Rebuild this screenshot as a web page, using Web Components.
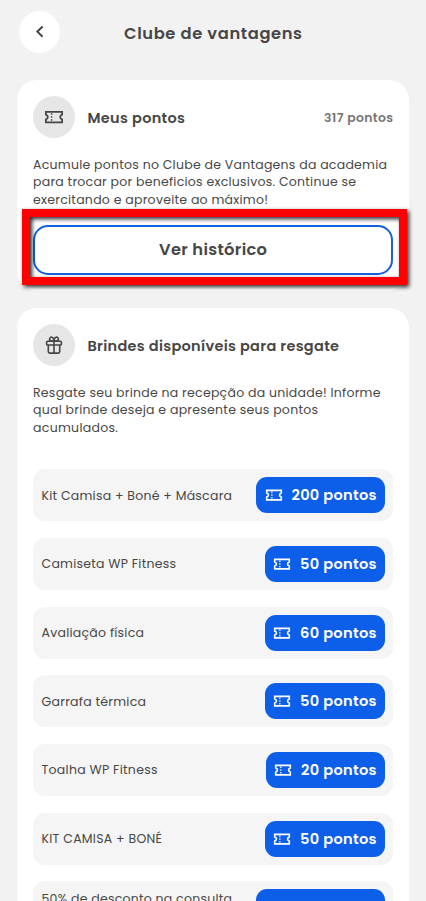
<!DOCTYPE html>
<html lang="pt-BR">
<head>
<meta charset="utf-8">
<title>Clube de vantagens</title>
<style>
html,body{margin:0;height:901px;overflow:hidden;background:#f2f2f2}
body{font-family:Poppins,Inter,"Noto Sans",sans-serif;color:#464646}
</style>
</head>
<body>
<club-page></club-page>
<script>
const define=(name,html,setup)=>customElements.define(name,class extends HTMLElement{
  connectedCallback(){
    if(this.shadowRoot)return;
    this.attachShadow({mode:'open'}).innerHTML=html;
    if(setup)setup.call(this,this.shadowRoot);
  }
});

// A single line of text, tracked so that it spans the width given in "w".
define('text-line','<style>:host{display:block;white-space:nowrap}span{display:inline-block}</style><span><slot></slot></span>',function(root){
  const span=root.querySelector('span'),w=+this.getAttribute('w');
  const n=this.textContent.length;
  span.style.letterSpacing=((w-span.getBoundingClientRect().width)/(n-1))+'px';
  this.style.width=w+'px';
});

define('ticket-icon','<style>:host{display:block;width:20px;height:20px}svg{display:block;width:100%;height:100%}</style><svg viewBox="0 0 20 20" fill="none" stroke="currentColor" stroke-width="1.8"><path d="M1.9 4.8H18.1V7.7C16.8 8.1 16.2 9 16.2 10s.6 1.9 1.9 2.3v3.1H1.9v-3.1C3.2 11.9 3.8 11 3.8 10S3.2 8.1 1.9 7.7z"/><path d="M7.6 6.2v1.5M7.6 9.2v1.6M7.6 12.3v1.5" stroke-width="1.4"/></svg>');

define('gift-icon','<style>:host{display:block;width:18px;height:20px}svg{display:block}</style><svg width="18" height="20" viewBox="0 0 18 20" fill="none" stroke="currentColor" stroke-width="1.6" stroke-linejoin="round"><rect x="1.6" y="6.2" width="14.8" height="3.8" rx="1.1"/><path d="M3.3 10v6.6q0 1.5 1.5 1.5h8.4q1.5 0 1.5-1.5V10M9 6v12M9 6H6.4Q4.5 5.8 4.6 4C4.7 2.4 6 1.8 7.1 2.3 8.3 2.8 9 4.4 9 6zM9 6h2.6q1.9-.2 1.8-2C13.3 2.4 12 1.8 10.9 2.3 9.7 2.8 9 4.4 9 6z"/></svg>');

define('page-header',`<style>
:host{display:grid;grid-template-columns:42px 1fr 42px;align-items:center;height:64px;padding:0 19px;box-sizing:border-box}
.back{width:41px;height:42px;border-radius:50%;background:#fff;display:grid;place-items:center}
.t{justify-self:center;font:600 16.3px/24px Poppins,Inter,sans-serif;padding-top:3px}
</style><div class="back"><svg width="12" height="16" viewBox="0 0 12 16" fill="none" stroke="#444" stroke-width="2"><path d="M8.6 2.5 3.4 7.6l5.2 5.1"/></svg></div><div class="t"><slot></slot></div>`);

define('info-card',`<style>
:host{display:block;background:#fff;border-radius:20px;padding:16.5px 16px 16px;box-sizing:border-box;width:392px}
header{display:flex;align-items:center;height:41px}
.c{width:42px;height:42px;border-radius:50%;background:#e6e6e6;display:grid;place-items:center;margin-right:12.5px;flex:none}
.h{font-size:14.5px;font-weight:600;line-height:20px;padding-top:1px}
.m{margin-left:auto;font-size:12.4px;font-weight:600;line-height:20px;color:#747474;padding-top:1px}
.p{font-size:12.5px;line-height:17.6px;margin-top:18px}
</style><header><div class="c"><slot name="icon"></slot></div><div class="h"><slot name="title"></slot></div><div class="m"><slot name="meta"></slot></div></header><div class="p"><slot name="text"></slot></div><slot></slot>`);

define('outline-button',`<style>
:host{display:flex;align-items:center;justify-content:center;height:50px;margin-top:16.5px;box-sizing:border-box;border:2px solid #1560df;border-radius:15px;font-size:16.3px;font-weight:600;line-height:24px;background:#fff}
::slotted(*){margin-top:1px}
</style><slot></slot>`);

define('highlight-frame',`<style>
:host{display:block;position:absolute;left:22px;top:209px;width:385px;height:76px;box-sizing:border-box;border:8px solid #f00;filter:drop-shadow(2px 2px 2px rgba(0,0,0,.85));pointer-events:none}
</style>`);

define('points-badge',`<style>
:host{display:flex;align-items:center;justify-content:space-between;height:36px;box-sizing:border-box;padding:0 8px 0 8.5px;border-radius:11px;background:#0d5fe9;color:#fff;font-size:14.6px;font-weight:600;line-height:20px;flex:none}
ticket-icon{width:18px;height:18px}
</style><ticket-icon></ticket-icon><slot></slot>`);

define('gift-row',`<style>
:host{display:flex;align-items:center;justify-content:space-between;height:52px;padding:0 8.5px;margin-bottom:16.67px;box-sizing:border-box;border-radius:12px;background:#f5f5f5;font-size:12.5px;line-height:18px}
::slotted(text-line){padding-top:1px}
::slotted(.two-line){padding-bottom:17px}
</style><slot></slot><slot name="badge"></slot>`);

const rows=[
 ['Kit Camisa + Boné + Máscara',190.5,'200 pontos',85,128.5],
 ['Camiseta WP Fitness',134.5,'50 pontos',76.5,120],
 ['Avaliação física',102.5,'60 pontos',76.5,120],
 ['Garrafa térmica',104.5,'50 pontos',76.5,120],
 ['Toalha WP Fitness',116,'20 pontos',75.5,119],
 ['KIT CAMISA + BONÉ',120.5,'50 pontos',76.5,120],
 ['50% de desconto na consulta',190.5,'',0,128.5]
];
define('club-page',`<style>
:host{display:block;position:relative;height:901px;overflow:hidden}
main{display:flex;flex-direction:column;gap:17px;padding:16px 17px 0}
.one{height:211px}
.two{height:640px;flex:none}
.list{margin-top:33px}
</style>
<page-header><text-line w="178">Clube de vantagens</text-line></page-header>
<main>
<info-card class="one"><ticket-icon slot="icon"></ticket-icon><text-line slot="title" w="97.5">Meus pontos</text-line><text-line slot="meta" w="69">317 pontos</text-line>
<div slot="text"><text-line w="354">Acumule pontos no Clube de Vantagens da academia</text-line><text-line w="323">para trocar por beneficios exclusivos. Continue se</text-line><text-line w="235">exercitando e aproveite ao máximo!</text-line></div>
<outline-button><text-line w="108">Ver histórico</text-line></outline-button></info-card>
<info-card class="two"><gift-icon slot="icon"></gift-icon><text-line slot="title" w="251.5">Brindes disponíveis para resgate</text-line>
<div slot="text"><text-line w="347.5">Resgate seu brinde na recepção da unidade! Informe</text-line><text-line w="285">qual brinde deseja e apresente seus pontos</text-line><text-line w="85">acumulados.</text-line></div>
<div class="list">${rows.map(([t,w,p,pw,bw],i)=>`<gift-row><text-line w="${w}" class="${i==6?'two-line':''}">${t}</text-line><points-badge slot="badge" style="width:${bw}px">${p?`<text-line w="${pw}">${p}</text-line>`:''}</points-badge></gift-row>`).join('')}</div></info-card>
</main>
<highlight-frame></highlight-frame>`);
</script>
</body>
</html>
